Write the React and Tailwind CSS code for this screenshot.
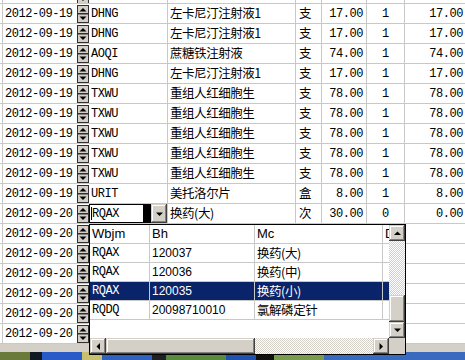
import React from 'react';

const ROWS = [
  { d: '2012-09-19', c: 'DHNG', n: '左卡尼汀注射液1', u: '支', p: '17.00', q: '1', t: '17.00' },
  { d: '2012-09-19', c: 'DHNG', n: '左卡尼汀注射液1', u: '支', p: '17.00', q: '1', t: '17.00' },
  { d: '2012-09-19', c: 'AOQI', n: '蔗糖铁注射液', u: '支', p: '74.00', q: '1', t: '74.00' },
  { d: '2012-09-19', c: 'DHNG', n: '左卡尼汀注射液1', u: '支', p: '17.00', q: '1', t: '17.00' },
  { d: '2012-09-19', c: 'TXWU', n: '重组人红细胞生', u: '支', p: '78.00', q: '1', t: '78.00' },
  { d: '2012-09-19', c: 'TXWU', n: '重组人红细胞生', u: '支', p: '78.00', q: '1', t: '78.00' },
  { d: '2012-09-19', c: 'TXWU', n: '重组人红细胞生', u: '支', p: '78.00', q: '1', t: '78.00' },
  { d: '2012-09-19', c: 'TXWU', n: '重组人红细胞生', u: '支', p: '78.00', q: '1', t: '78.00' },
  { d: '2012-09-19', c: 'TXWU', n: '重组人红细胞生', u: '支', p: '78.00', q: '1', t: '78.00' },
  { d: '2012-09-19', c: 'URIT', n: '美托洛尔片', u: '盒', p: '8.00', q: '1', t: '8.00' },
  { d: '2012-09-20', edit: true, n: '换药(大)', u: '次', p: '30.00', q: '0', t: '0.00' },
  { d: '2012-09-20' },
  { d: '2012-09-20' },
  { d: '2012-09-20' },
  { d: '2012-09-20' },
  { d: '2012-09-20' },
  { d: '2012-09-20' },
];

const LIST = [
  { w: 'RQAX', b: '120037', m: '换药(大)' },
  { w: 'RQAX', b: '120036', m: '换药(中)' },
  { w: 'RQAX', b: '120035', m: '换药(小)', sel: true },
  { w: 'RQDQ', b: '20098710010', m: '氯解磷定针' },
];

const RAISED =
  'bg-[#d4d0c8] shadow-[inset_-1px_-1px_#404040,inset_1px_1px_#d4d0c8,inset_-2px_-2px_#808080,inset_2px_2px_#ffffff]';
const TRACK =
  'bg-[repeating-conic-gradient(#d4d0c8_0_25%,#ffffff_0_50%)] bg-[length:2px_2px]';
const CJK = "text-[12.5px] font-['Noto_Sans_CJK_SC',sans-serif]";

function Spinner() {
  return (
    <svg width="12" height="18" viewBox="0 0 12 18">
      <rect x="0.5" y="0.5" width="11" height="17" fill="#d4d0c8" stroke="#303030" />
      <line x1="1" y1="8.5" x2="11" y2="8.5" stroke="#303030" />
      <line x1="1" y1="9.5" x2="11" y2="9.5" stroke="#808080" />
      <path d="M2.5 6.5 L6 3 L9.5 6.5Z" fill="#000" />
      <path d="M2.5 11.5 L6 15 L9.5 11.5Z" fill="#000" />
    </svg>
  );
}

function Arrow({ dir }) {
  const d = {
    up: 'M0 4 L3.5 0.5 L7 4Z',
    down: 'M0 0.5 L3.5 4 L7 0.5Z',
    left: 'M4 0 L0.5 3.5 L4 7Z',
    right: 'M0.5 0 L4 3.5 L0.5 7Z',
  }[dir];
  const vert = dir === 'up' || dir === 'down';
  return (
    <svg width={vert ? 7 : 4} height={vert ? 4 : 7}>
      <path d={d} fill="#000" />
    </svg>
  );
}

function Btn({ dir, className = '' }) {
  return (
    <div className={`${RAISED} flex items-center justify-center ${className}`}>
      <Arrow dir={dir} />
    </div>
  );
}

function Row({ r }) {
  const line = 'border-r border-[#c8c8c8]';
  return (
    <div className="flex h-[20px] border-b border-[#c8c8c8]">
      <div className={`w-[3px] ${line}`} />
      <div className="w-[74px] pl-[2px] flex items-center">{r.d}</div>
      <div className="w-[12px] flex items-center">
        <Spinner />
      </div>
      <div className={`w-[79px] ${line} flex items-center`}>
        {r.edit ? (
          <div className="flex w-full h-full">
            <div className="flex-1 bg-white border border-black flex items-center pl-[1px]">
              <span className="w-[1px] h-[13px] bg-black" />
              <span>RQAX</span>
            </div>
            <div className="w-[7px] bg-black" />
            <Btn dir="down" className="w-[16px]" />
          </div>
        ) : (
          <span className="pl-[2px]">{r.c}</span>
        )}
      </div>
      <div className={`w-[128px] ${line} pl-[2px] flex items-center ${CJK}`}>{r.n}</div>
      <div className={`w-[26px] ${line} pl-[3px] flex items-center ${CJK}`}>{r.u}</div>
      <div className={`w-[45px] ${line} pr-[3px] flex items-center justify-end`}>{r.p}</div>
      <div className={`w-[38px] ${line} flex items-center justify-center`}>{r.q}</div>
      <div className="flex-1 pr-[2px] flex items-center justify-end">{r.t}</div>
    </div>
  );
}

function Popup() {
  const cell = 'border-r border-[#c8c8c8] flex items-center pl-[2px]';
  return (
    <div className="absolute left-[89px] top-[224px] w-[317px] h-[131px] border border-black bg-white flex flex-col">
      <div className="flex flex-1 min-h-0">
        <div className="flex-1 overflow-hidden">
          <div className="flex h-[19px] border-b border-[#c8c8c8] font-['Liberation_Sans',sans-serif] text-[13px] tracking-normal w-[320px]">
            <div className={`w-[60px] ${cell}`}>Wbjm</div>
            <div className={`w-[105px] ${cell}`}>Bh</div>
            <div className={`w-[128px] ${cell}`}>Mc</div>
            <div className="flex-1 flex items-center pl-[2px]">D</div>
          </div>
          {LIST.map((l) => (
            <div
              key={l.b}
              className={`flex h-[19px] border-b border-[#c8c8c8] w-[320px] ${l.sel ? 'bg-[#0a246a] text-white' : ''}`}
            >
              <div className={`w-[60px] ${cell}`}>{l.w}</div>
              <div className={`w-[105px] ${cell} font-['Liberation_Sans',sans-serif] text-[12px] tracking-normal`}>{l.b}</div>
              <div className={`w-[128px] ${cell} ${CJK}`}>{l.m}</div>
              <div className="flex-1" />
            </div>
          ))}
        </div>
        <div className="w-[16px] flex flex-col">
          <Btn dir="up" className="h-[16px]" />
          <div className={`h-[54px] ${TRACK}`} />
          <div className={`flex-1 ${RAISED}`} />
          <Btn dir="down" className="h-[16px]" />
        </div>
      </div>
      <div className="flex h-[16px]">
        <Btn dir="left" className="w-[16px]" />
        <div className={`w-[149px] ${RAISED}`} />
        <div className={`flex-1 ${TRACK}`} />
        <Btn dir="right" className="w-[16px]" />
        <div className="w-[16px] bg-[#d4d0c8]" />
      </div>
    </div>
  );
}

export default function App() {
  return (
    <div className="relative w-[465px] h-[360px] overflow-hidden bg-white text-black text-[12px] tracking-[-0.45px] font-['Liberation_Mono','Noto_Sans_CJK_SC',monospace]">
      {/* partial top row */}
      <div className="flex h-[4px] border-b border-[#c8c8c8] overflow-hidden">
        <div className="w-[3px] border-r border-[#c8c8c8]" />
        <div className="w-[74px]" />
        <div className="w-[12px] flex items-end">
          <div className="-mb-[1px] h-[4px] overflow-hidden flex items-end">
            <Spinner />
          </div>
        </div>
        <div className="w-[79px] border-r border-[#c8c8c8]" />
        <div className="w-[128px] border-r border-[#c8c8c8]" />
        <div className="w-[26px] border-r border-[#c8c8c8]" />
        <div className="w-[45px] border-r border-[#c8c8c8]" />
        <div className="w-[38px] border-r border-[#c8c8c8]" />
      </div>

      {ROWS.map((r, i) => (
        <Row key={i} r={r} />
      ))}

      <div className="h-[8px] bg-[#d4d0c8]" />
      <div className="flex h-[8px] bg-[#1c3c8c]">
        <div className="w-[30px] bg-[#6a7a3a]" />
        <div className="w-[12px] bg-[#101820]" />
        <div className="w-[40px] bg-[#2a5ac8]" />
        <div className="w-[20px] bg-[#c8c070]" />
        <div className="w-[50px] bg-[#3060c0]" />
        <div className="w-[14px] bg-[#202020]" />
        <div className="w-[60px] bg-[#5a8a40]" />
        <div className="w-[30px] bg-[#2050b0]" />
        <div className="w-[18px] bg-[#101010]" />
        <div className="w-[50px] bg-[#7a9a50]" />
        <div className="flex-1 bg-[#3a6ac0]" />
      </div>

      <Popup />
    </div>
  );
}
